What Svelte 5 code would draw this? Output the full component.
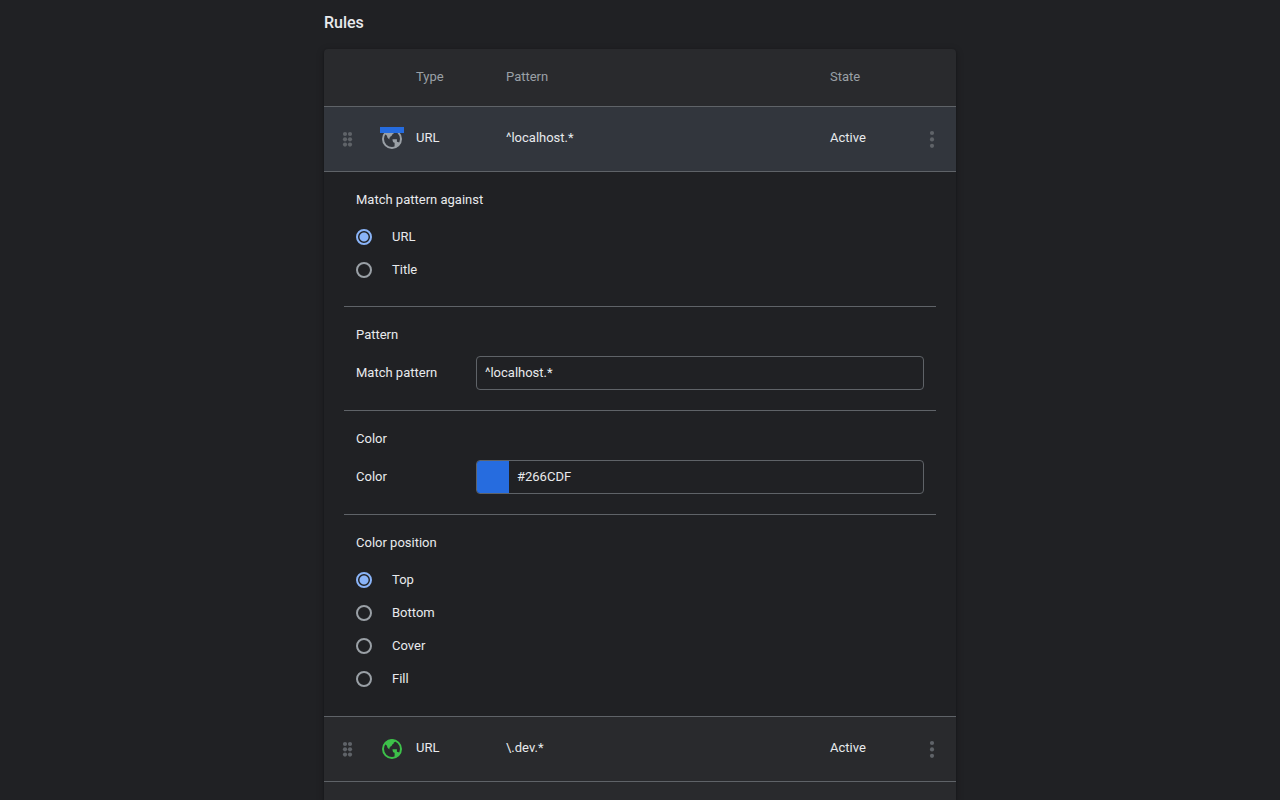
<script>
  let matchAgainst = $state('URL');
  let pattern = $state('^localhost.*');
  let color = $state('#266CDF');
  let position = $state('Top');

  const targets = ['URL', 'Title'];
  const positions = ['Top', 'Bottom', 'Cover', 'Fill'];
</script>

{#snippet globe(fill, bar)}
  <svg class="favicon" viewBox="0 0 24 24" aria-hidden="true">
    <circle cx="12" cy="12" r="9" fill="none" stroke={fill} stroke-width="2" />
    <path
      {fill}
      d="M5 6C6.700 3.900 9 2.500 12 2.500c1.300 0 2.400.2 3.400.7 0 1.200-.4 2-1.500 2.100 0 1.300-.6 2-1.800 2.100-.1 1.200-.6 1.800-1.500 1.900-.1.8-.5 1.300-1.200 1.400v1.700C7.800 11.400 7 10.200 7 8.600 5.800 8.100 5.100 7.200 5 6z"
    />
    <path
      {fill}
      d="M12.500 12.200h4.400v2.600c1.500 0 2.400.7 2.800 2l-4.900 4.300c-.4-.8-.5-1.700-.2-2.700v-2.600c-1.500-.4-2.100-1.600-2.100-3.600z"
    />
    {#if bar}<rect width="24" height="6" fill={bar} />{/if}
  </svg>
{/snippet}

{#snippet ruleRow(rule, selected)}
  <tr class="rule" class:selected>
    <td class="tool">
      <button class="icon" aria-label="Reorder rule">
        <svg viewBox="0 0 24 24" aria-hidden="true">
          {#each [7, 12.3, 17.6] as y}
            <circle cx="9" cy={y} r="2.1" />
            <circle cx="14" cy={y} r="2.1" />
          {/each}
        </svg>
      </button>
    </td>
    <td class="preview">{@render globe(rule.fill, rule.bar)}</td>
    <td>URL</td>
    <td>{rule.pattern}</td>
    <td>Active</td>
    <td class="tool">
      <button class="icon" aria-label="More actions">
        <svg viewBox="0 0 24 24" aria-hidden="true">
          {#each [6, 12.4, 18.8] as y}
            <circle cx="12" cy={y} r="2.1" />
          {/each}
        </svg>
      </button>
    </td>
  </tr>
{/snippet}

<main>
  <h1>Rules</h1>
  <div class="card">
    <table>
      <colgroup>
        <col class="c-tool" />
        <col class="c-preview" />
        <col class="c-type" />
        <col />
        <col class="c-state" />
        <col class="c-tool" />
      </colgroup>
      <thead>
        <tr>
          <td></td>
          <td></td>
          <th scope="col">Type</th>
          <th scope="col">Pattern</th>
          <th scope="col">State</th>
          <td></td>
        </tr>
      </thead>
      <tbody>
        {@render ruleRow({ pattern, fill: '#9aa0a6', bar: color }, true)}
        <tr class="details">
          <td colspan="6">
            <section>
              <h2 id="match-title">Match pattern against</h2>
              <div role="radiogroup" aria-labelledby="match-title">
                {#each targets as target}
                  <label class="option">
                    <input type="radio" name="target" value={target} bind:group={matchAgainst} />
                    <span>{target}</span>
                  </label>
                {/each}
              </div>
            </section>
            <section class="fields">
              <h2>Pattern</h2>
              <div class="field">
                <label for="pattern">Match pattern</label>
                <div class="box"><input id="pattern" type="text" bind:value={pattern} /></div>
              </div>
            </section>
            <section class="fields">
              <h2>Color</h2>
              <div class="field">
                <label for="color">Color</label>
                <div class="box">
                  <input
                    class="swatch"
                    type="color"
                    aria-label="Pick color"
                    value={color.toLowerCase()}
                    oninput={(e) => (color = e.currentTarget.value.toUpperCase())}
                  />
                  <input id="color" type="text" bind:value={color} />
                </div>
              </div>
            </section>
            <section>
              <h2 id="position-title">Color position</h2>
              <div role="radiogroup" aria-labelledby="position-title">
                {#each positions as item}
                  <label class="option">
                    <input type="radio" name="position" value={item} bind:group={position} />
                    <span>{item}</span>
                  </label>
                {/each}
              </div>
            </section>
          </td>
        </tr>
        {@render ruleRow({ pattern: '\\.dev.*', fill: '#3dc14a' }, false)}
      </tbody>
    </table>
  </div>
</main>

<style>
  :global(body) {
    background: #202124;
    color: #e8eaed;
    font: 13px/16px Roboto, sans-serif;
  }

  main {
    box-sizing: border-box;
    display: flex;
    flex-direction: column;
    max-width: 632px;
    min-height: 100vh;
    margin: 0 auto;
    padding-top: 13px;
  }

  h1 {
    margin: 0 0 16px;
    font-size: 16px;
    line-height: 20px;
    font-weight: 500;
  }

  .card {
    flex: 1;
    background: #292a2d;
    border-radius: 4px 4px 0 0;
    box-shadow: 0 1px 2px rgba(0, 0, 0, 0.3), 0 2px 6px 2px rgba(0, 0, 0, 0.15);
  }

  table {
    width: 100%;
    table-layout: fixed;
    border-spacing: 0;
  }

  .c-tool {
    width: 48px;
  }

  .c-preview {
    width: 44px;
  }

  .c-type {
    width: 90px;
  }

  .c-state {
    width: 78px;
  }

  th,
  td {
    box-sizing: border-box;
    padding: 0 0 2px;
    border-bottom: 1px solid #5f6368;
    text-align: left;
  }

  thead th,
  thead td {
    height: 58px;
    color: #9aa0a6;
    font-weight: 400;
  }

  .rule td {
    height: 65px;
  }

  .rule .tool,
  .rule .preview {
    padding-bottom: 0;
  }

  .rule .preview {
    padding-left: 8px;
  }

  .selected td {
    background: #32363d;
  }

  .favicon {
    display: block;
    width: 24px;
    height: 24px;
  }

  .icon {
    display: block;
    width: 24px;
    height: 24px;
    margin: 0 auto;
    padding: 0;
    border: 0;
    background: none;
    cursor: pointer;
  }

  .icon svg {
    display: block;
    fill: #5f6368;
  }

  .details > td {
    padding: 0 20px;
    background: #202124;
  }

  section {
    padding: 20px 12px;
    border-bottom: 1px solid #5f6368;
  }

  section:last-child {
    border-color: transparent;
  }

  h2 {
    margin: 0 0 12px;
    font-size: 13px;
    line-height: 16px;
    font-weight: 400;
  }

  .fields h2 {
    margin-bottom: 13px;
  }

  .option {
    display: flex;
    align-items: center;
    gap: 20px;
    height: 33px;
  }

  .option input {
    appearance: none;
    box-sizing: border-box;
    width: 16px;
    height: 16px;
    margin: 0;
    border: 2px solid #9aa0a6;
    border-radius: 50%;
  }

  .option input:checked {
    border-color: #8ab4f8;
    background: radial-gradient(circle, #8ab4f8 4px, transparent 5px);
  }

  .field {
    display: grid;
    grid-template-columns: 120px 1fr;
    align-items: center;
  }

  .box {
    display: flex;
    overflow: hidden;
    border: 1px solid #5f6368;
    border-radius: 4px;
  }

  .box input[type='text'] {
    flex: 1;
    min-width: 0;
    height: 32px;
    box-sizing: border-box;
    padding: 0 8px 2px;
    border: 0;
    outline: 0;
    background: none;
    color: inherit;
    font: inherit;
  }

  .swatch {
    appearance: none;
    width: 32px;
    height: 32px;
    padding: 0;
    border: 0;
    background: none;
  }

  .swatch::-webkit-color-swatch-wrapper {
    padding: 0;
  }

  .swatch::-webkit-color-swatch {
    border: 0;
    border-radius: 0;
  }
</style>
